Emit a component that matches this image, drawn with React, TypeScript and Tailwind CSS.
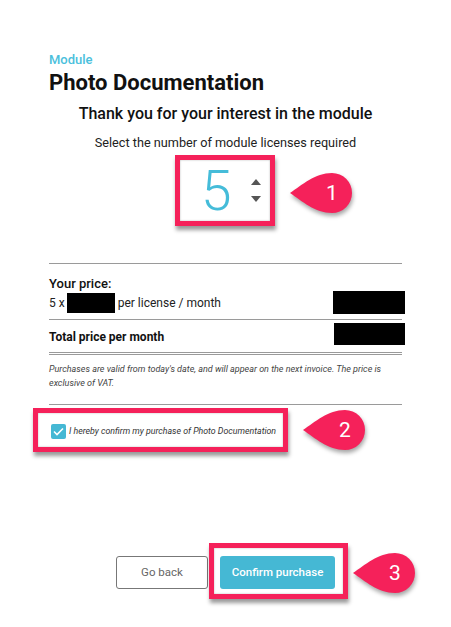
import { FC } from "react";

const RED = "#f5215a";

// teardrop callout pointing left
const Callout: FC<{ n: string; className: string }> = ({ n, className }) => (
  <div className={`absolute ${className}`}>
    <svg width="63" height="42" viewBox="0 0 63 42" className="drop-shadow-[1px_3px_2px_rgba(0,0,0,0.35)]">
      <path
        d="M0 21 C 12 13, 25 1, 42 1 A 20 20 0 1 1 42 41 C 25 41, 12 29, 0 21 Z"
        fill={RED}
      />
    </svg>
    <span className="absolute left-[22px] top-0 w-[40px] h-[42px] flex items-center justify-center text-white text-[21px] leading-none">
      {n}
    </span>
  </div>
);

const Marker: FC<{ className: string }> = ({ className }) => (
  <div
    className={`absolute border-[5px] border-[#f5215a] shadow-[1px_4px_4px_rgba(0,0,0,0.4),inset_0_0_2px_rgba(0,0,0,0.3)] ${className}`}
  />
);

const App: FC = () => {
  return (
    <div className="relative w-[451px] h-[627px] bg-white font-['Roboto','Liberation_Sans',sans-serif] text-[#222] overflow-hidden">
      <div className="mx-auto w-[353px] pt-[52px] flex flex-col">
        <p className="text-[13px] leading-4 font-medium text-[#4bbfdc]">Module</p>
        <h1 className="mt-[2px] text-[22px] leading-[26px] font-bold text-[#111]">Photo Documentation</h1>
        <h2 className="mt-[8px] text-center text-[16px] leading-5 font-medium text-[#111]">
          Thank you for your interest in the module
        </h2>
        <p className="mt-[11px] text-center text-[12.7px] leading-4 text-[#222]">
          Select the number of module licenses required
        </p>

        <div className="mt-[10px] ml-[131px] w-[90px] h-[61px] flex items-center pl-[21px] gap-[19px]">
          <span className="text-[55px] leading-none font-light text-[#45bcd9]">5</span>
          <div className="flex flex-col gap-[11px] mt-[-2px]">
            <svg width="10" height="6" viewBox="0 0 10 6"><path d="M5 0 L10 6 L0 6 Z" fill="#555" /></svg>
            <svg width="10" height="6" viewBox="0 0 10 6"><path d="M0 0 L10 0 L5 6 Z" fill="#555" /></svg>
          </div>
        </div>

        <div className="mt-[41px] border-t border-[#9a9a9a]" />
        <p className="mt-[12px] text-[13px] leading-4 font-medium text-[#111]">Your price:</p>
        <div className="mt-[-1px] h-[23px] flex items-center justify-between">
          <div className="flex items-center text-[12px]">
            <span>5 x</span>
            <span className="ml-[2px] w-[48px] h-[20px] bg-black" />
            <span className="ml-[3px]">per license / month</span>
          </div>
          <span className="w-[72px] h-[23px] bg-black -mr-[3px]" />
        </div>
        <div className="mt-[5px] border-t border-[#9a9a9a]" />
        <div className="mt-[3px] h-[22px] flex items-end justify-between">
          <span className="text-[12px] font-bold leading-4 text-[#111]">Total price per month</span>
          <span className="w-[71px] h-[22px] bg-black -mr-[3px]" />
        </div>
        <div className="mt-[7px] h-[3px] border-y border-[#9a9a9a]" />
        <p className="mt-[7px] text-[9px] leading-[14px] italic text-[#444]">
          Purchases are valid from today's date, and will appear on the next invoice. The price is exclusive of VAT.
        </p>
        <div className="mt-[14px] border-t border-[#9a9a9a]" />

        <label className="mt-[19px] ml-[2px] flex items-center gap-[3px]">
          <span className="w-[15px] h-[15px] rounded-[2px] bg-[#45b8d4] flex items-center justify-center">
            <svg width="11" height="9" viewBox="0 0 11 9">
              <path d="M1 4.5 L4 7.5 L10 1.5" stroke="white" strokeWidth="1.6" fill="none" />
            </svg>
          </span>
          <span className="text-[8.8px] italic text-[#333]">I hereby confirm my purchase of Photo Documentation</span>
        </label>

        <div className="mt-[117px] flex justify-center gap-[12px]">
          <button className="w-[92px] h-[33px] rounded-[3px] border border-[#777] text-[11.5px] text-[#666] bg-white">
            Go back
          </button>
          <button className="w-[115px] h-[33px] rounded-[3px] bg-[#45b8d4] text-[11.5px] font-medium text-white">
            Confirm purchase
          </button>
        </div>
      </div>

      <Marker className="left-[175px] top-[155px] w-[100px] h-[71px]" />
      <Callout n="1" className="left-[290px] top-[172px]" />
      <Marker className="left-[33px] top-[408px] w-[255px] h-[44px]" />
      <Callout n="2" className="left-[303px] top-[409px]" />
      <Marker className="left-[209px] top-[543px] w-[139px] h-[56px]" />
      <Callout n="3" className="left-[353px] top-[552px]" />
    </div>
  );
};

export default App;
